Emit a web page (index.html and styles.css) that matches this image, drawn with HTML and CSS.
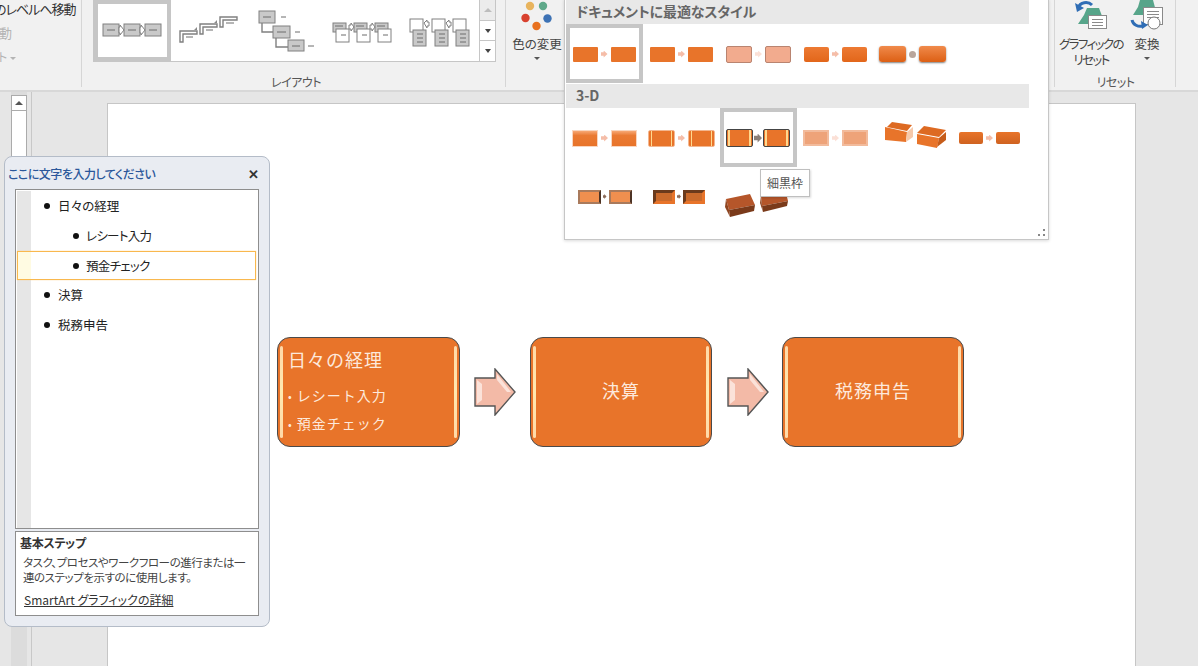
FILE: index.html
```html
<!DOCTYPE html>
<html lang="ja">
<head>
  <meta charset="UTF-8" />
  <title>SmartArt スタイル</title>
  <link rel="stylesheet" href="styles.css">
</head>
<body>
  <header class="ribbon">
    <section class="group group-outline">
      <div class="outline-row row-move">のレベルへ移動</div>
      <div class="outline-row row-off">移動</div>
      <div class="outline-row row-off row-last">ト<span class="caret caret-off"></span></div>
    </section>

    <section class="group group-layout">
      <div class="gallery">
        <div class="layout-cell is-selected">
          <svg width="69" height="53" viewBox="0 0 69 53">
            <g class="ic-fill"><rect x="5" y="20" width="16" height="12"/><rect x="26" y="20" width="16" height="12"/><rect x="47" y="20" width="16" height="12"/></g>
            <g class="ic-white"><path d="M21 23h1v-2l4 5-4 5v-2h-1z"/><path d="M42 23h1v-2l4 5-4 5v-2h-1z"/></g>
            <path class="ic-dash" d="M9 26h8M30 26h8M51 26h8"/>
          </svg>
        </div>
        <div class="layout-cell">
          <svg width="77" height="60" viewBox="0 0 77 60">
            <g class="ic-line"><path d="M9 41V30h17v3H12v8z"/><path d="M29 33V23h17v3H32v7z"/><path d="M49 26V16h17v3H52v7z"/></g>
            <path class="ic-dash" d="M15 36h7M35 29h7M55 22h8"/>
            <path class="ic-tri" d="M23 29l3-3v3zM43 22l3-3v3z"/>
          </svg>
        </div>
        <div class="layout-cell">
          <svg width="77" height="60" viewBox="0 0 77 60">
            <g class="ic-line"><path d="M14 22v9h11M28 37v9h12"/></g>
            <g class="ic-fill"><rect x="11" y="10" width="16" height="12"/><rect x="25" y="25" width="17" height="12"/><rect x="40" y="39" width="16" height="11"/></g>
            <path class="ic-dash" d="M15 16h8M29 31h9M44 45h8M33 16h5M47 31h5M60 45h6"/>
          </svg>
        </div>
        <div class="layout-cell">
          <svg width="77" height="60" viewBox="0 0 77 60">
            <g class="ic-fill"><rect x="8" y="22" width="13" height="9"/><rect x="29" y="22" width="13" height="9"/><rect x="50" y="22" width="13" height="9"/></g>
            <g class="ic-paper"><rect x="11" y="28" width="13" height="13"/><rect x="32" y="28" width="13" height="13"/><rect x="53" y="28" width="13" height="13"/></g>
            <g class="ic-white"><path d="M24 24h2v-2l3 4-3 4v-2h-2z"/><path d="M45 24h2v-2l3 4-3 4v-2h-2z"/></g>
            <path class="ic-dash" d="M10 25h8M31 25h8M52 25h8M16 34h5M37 34h5M58 34h5"/>
          </svg>
        </div>
        <div class="layout-cell">
          <svg width="77" height="60" viewBox="0 0 77 60">
            <g class="ic-paper"><rect x="8" y="18" width="13" height="13"/><rect x="30" y="18" width="13" height="13"/><rect x="51" y="18" width="13" height="13"/></g>
            <g class="ic-fill"><rect x="11" y="29" width="13" height="16"/><rect x="33" y="29" width="13" height="16"/><rect x="54" y="29" width="13" height="16"/></g>
            <g class="ic-white"><path d="M22 22l3-3v2h2v4h-2v2z"/><path d="M44 22l3-3v2h2v4h-2v2z"/></g>
            <path class="ic-dash" d="M15 33h6M15 37h6M15 41h6M37 33h6M37 37h6M37 41h6M58 33h6M58 37h6M58 41h6"/>
          </svg>
        </div>
        <div class="gallery-scroll">
          <span class="scroll-btn scroll-off"><i class="tri-up"></i></span>
          <span class="scroll-btn"><i class="tri-down"></i></span>
          <span class="scroll-btn"><i class="tri-more"></i></span>
        </div>
      </div>
      <div class="group-label label-layout">レイアウト</div>
    </section>

    <section class="group group-colors">
      <div class="big-btn colors-btn">
        <svg class="colors-icon" width="32" height="32" viewBox="0 0 32 32">
          <circle cx="9" cy="6" r="4.2" fill="#e8b45e"/>
          <circle cx="22" cy="6" r="4.2" fill="#5fa98a"/>
          <circle cx="4.5" cy="18" r="4.2" fill="#d8412f"/>
          <circle cx="26.5" cy="18.5" r="4.2" fill="#3d72b4"/>
          <circle cx="15.5" cy="26" r="4.2" fill="#e8711e"/>
        </svg>
        <span class="btn-text">色の変更</span>
        <span class="caret"></span>
      </div>
    </section>

    <section class="group group-reset">
      <div class="reset-row">
        <div class="big-btn">
          <svg class="reset-icon" width="36" height="30" viewBox="0 0 36 30">
            <path d="M5 24l6-9 3-7h12l3 8-2 8z" fill="#57a58a"/>
            <rect x="15.500" y="15.500" width="18" height="13" fill="#fff" stroke="#8a8a8a"/>
            <path d="M19 19.500h11M19 22.500h11M19 25.500h11" stroke="#8a8a8a"/>
            <path d="M5 8c2-6 10-7 14-3" fill="none" stroke="#2f6db5" stroke-width="3"/>
            <path d="M2 3l2 9 7-4z" fill="#2f6db5"/>
          </svg>
          <span class="btn-text btn-narrow">グラフィックの<br>リセット</span>
        </div>
        <div class="big-btn">
          <svg class="reset-icon" width="36" height="30" viewBox="0 0 36 30">
            <path d="M4 15l5-8 2-7h13l4 15z" fill="#57a58a"/>
            <rect x="14.500" y="7.500" width="19" height="17" fill="#fff" stroke="#8a8a8a"/>
            <path d="M18 11.500h12M18 14.500h12M18 17.500h12" stroke="#8a8a8a"/>
            <circle cx="25" cy="23" r="6" fill="#fff" stroke="#777"/>
            <path d="M3 20c1 5 6 7 11 6" fill="none" stroke="#2f6db5" stroke-width="3"/>
            <path d="M19 25l-7-4 1 8z" fill="#2f6db5"/>
          </svg>
          <span class="btn-text">変換</span>
          <span class="caret"></span>
        </div>
      </div>
      <div class="group-label">リセット</div>
    </section>
  </header>

  <main class="workspace">
    <div class="side-scroll">
      <span class="side-up"><i class="tri-up"></i></span>
      <span class="side-thumb"></span>
    </div>
    <div class="slide">
      <div class="diagram">
        <div class="step step-list">
          <div class="step-title">日々の経理</div>
          <ul>
            <li>レシート入力</li>
            <li>預金チェック</li>
          </ul>
        </div>
        <svg class="step-arrow" width="42" height="48" viewBox="0 0 42 48">
          <path d="M1 10h20V1l20 23-20 23V38H1z" fill="#f3baa7" stroke="#555" stroke-width="1.4"/>
          <path d="M3 12l5 4v16l-5 4zM23 6l14 18h-4L23 12z" fill="#fbe2d9"/>
        </svg>
        <div class="step step-mid">決算</div>
        <svg class="step-arrow" width="42" height="48" viewBox="0 0 42 48">
          <path d="M1 10h20V1l20 23-20 23V38H1z" fill="#f3baa7" stroke="#555" stroke-width="1.4"/>
          <path d="M3 12l5 4v16l-5 4zM23 6l14 18h-4L23 12z" fill="#fbe2d9"/>
        </svg>
        <div class="step step-mid">税務申告</div>
      </div>
    </div>
  </main>

  <aside class="text-pane">
    <div class="pane-head">
      <span class="pane-title">ここに文字を入力してください</span>
      <span class="pane-close">✕</span>
    </div>
    <ul class="pane-list">
      <li class="lvl-1">日々の経理</li>
      <li class="lvl-2">レシート入力</li>
      <li class="lvl-2 is-current">預金チェック</li>
      <li class="lvl-1">決算</li>
      <li class="lvl-1">税務申告</li>
    </ul>
    <div class="pane-info">
      <div class="info-title">基本ステップ</div>
      <p class="info-text">タスク、プロセスやワークフローの進行または一連のステップを示すのに使用します。</p>
      <span class="info-link">SmartArt グラフィックの詳細</span>
    </div>
  </aside>

  <div class="style-menu">
    <div class="menu-head">ドキュメントに最適なスタイル</div>
    <div class="menu-grid">
      <div class="style-cell is-selected"><span class="thumb"><i class="bx flat"></i><i class="ar"></i><i class="bx flat"></i></span></div>
      <div class="style-cell"><span class="thumb"><i class="bx flat"></i><i class="ar"></i><i class="bx flat"></i></span></div>
      <div class="style-cell"><span class="thumb"><i class="bx pale"></i><i class="ar ar-pale"></i><i class="bx pale"></i></span></div>
      <div class="style-cell"><span class="thumb"><i class="bx strong"></i><i class="ar"></i><i class="bx strong"></i></span></div>
      <div class="style-cell"><span class="thumb"><i class="bx shade"></i><i class="ar ar-grey"></i><i class="bx shade"></i></span></div>
    </div>
    <div class="menu-head">3-D</div>
    <div class="menu-grid">
      <div class="style-cell"><span class="thumb"><i class="bx bevel"></i><i class="ar"></i><i class="bx bevel"></i></span></div>
      <div class="style-cell"><span class="thumb"><i class="bx glow"></i><i class="ar"></i><i class="bx glow"></i></span></div>
      <div class="style-cell is-selected"><span class="thumb thumb-tight"><i class="bx dark"></i><i class="ar ar-dark"></i><i class="bx dark"></i></span></div>
      <div class="style-cell"><span class="thumb"><i class="bx soft"></i><i class="ar ar-pale"></i><i class="bx soft"></i></span></div>
      <div class="style-cell">
        <svg class="iso" width="62" height="30" viewBox="0 0 62 30">
          <path d="M2 7l5-5 20 3-5 6z" fill="#dd6a22"/>
          <path d="M0 7l22 5-1 10-21-2z" fill="#e8742a"/>
          <path d="M22 12l6-5v10l-7 5z" fill="#f6c9ab"/>
          <path d="M32 13l7-7 22 4-7 7z" fill="#dd6a22"/>
          <path d="M32 14l22 4-2 10-20-4z" fill="#e8742a"/>
          <path d="M54 18l7-6v8l-9 7z" fill="#c65c1a"/>
        </svg>
      </div>
      <div class="style-cell"><span class="thumb"><i class="bx slim"></i><i class="ar"></i><i class="bx slim"></i></span></div>
      <div class="style-cell"><span class="thumb thumb-small"><i class="bx frame"></i><i class="ar ar-tiny"></i><i class="bx frame"></i></span></div>
      <div class="style-cell"><span class="thumb thumb-small thumb-left"><i class="bx inset"></i><i class="ar ar-tiny"></i><i class="bx inset"></i></span></div>
      <div class="style-cell">
        <svg class="brick" width="66" height="30" viewBox="0 0 66 30">
          <path d="M2 6l24-5 5 11-26 5z" fill="#b5562a"/>
          <path d="M5 17l26-5-1 6-24 6z" fill="#7a3a1a"/>
          <path d="M2 6l3 11 1 7-5-10z" fill="#8f4520"/>
          <path d="M37 3l25-3 2 8-26 5z" fill="#b5562a"/>
          <path d="M38 13l26-5-1 5-24 6z" fill="#7a3a1a"/>
          <path d="M37 3l1 10 1 6-3-9z" fill="#8f4520"/>
        </svg>
      </div>
    </div>
    <span class="menu-grip"></span>
    <div class="tooltip">細黒枠</div>
  </div>
</body>
</html>
```

FILE: styles.css
```css
* {
  box-sizing: border-box;
}

html, body {
  height: 100%;
}

body {
  margin: 0;
  position: relative;
  display: flex;
  flex-direction: column;
  overflow: hidden;
  background: #e6e6e6;
  color: #333;
  font-family: "Noto Sans CJK JP", "Noto Sans", sans-serif;
  font-size: 12px;
  font-feature-settings: "palt";
}

/* ribbon */
.ribbon {
  flex: 0 0 92px;
  display: flex;
  background: #f1f1f1;
  border-bottom: 2px solid #d8d8d8;
}

.group {
  position: relative;
  display: flex;
  flex-direction: column;
  height: 87px;
  border-right: 1px solid #d6d6d6;
}

.group-label {
  margin-top: auto;
  margin-bottom: -5px;
  height: 20px;
  line-height: 20px;
  text-align: center;
  letter-spacing: -0.5px;
  color: #555;
}

.label-layout {
  padding-left: 3px;
}

.group-outline {
  flex: 0 0 82px;
  overflow: hidden;
  white-space: nowrap;
}

.outline-row {
  height: 24px;
  line-height: 17px;
  font-size: 13px;
}

.row-move {
  margin-left: -6px;
  letter-spacing: -1px;
}

.row-off {
  color: #b4b4b4;
  margin-left: -14px;
}

.row-last {
  margin-left: -2px;
  font-size: 12px;
}

.group-layout {
  flex: 0 0 423px;
  padding: 0 9px 0 11px;
}

.gallery {
  display: flex;
  height: 62px;
  background: #fff;
  border: 1px solid #c6c6c6;
  border-top: 0;
  overflow: hidden;
}

.layout-cell {
  flex: 0 0 77px;
  height: 61px;
  display: flex;
  align-items: center;
  justify-content: center;
}

.layout-cell.is-selected {
  border: 4px solid #c6c6c6;
}

.ic-fill rect {
  fill: #c9c9c9;
  stroke: #808080;
}

.ic-paper rect {
  fill: #fff;
  stroke: #808080;
}

.ic-white path {
  fill: #fff;
  stroke: #808080;
}

.ic-line path {
  fill: none;
  stroke: #808080;
  stroke-width: 1.4;
}

.ic-dash {
  fill: none;
  stroke: #6d6d6d;
}

.ic-tri {
  fill: #8a8a8a;
}

.gallery-scroll {
  margin-left: auto;
  flex: 0 0 16px;
  display: flex;
  flex-direction: column;
  border-left: 1px solid #c6c6c6;
}

.scroll-btn {
  flex: 1;
  display: flex;
  align-items: center;
  justify-content: center;
  border-bottom: 1px solid #c6c6c6;
}

.scroll-btn:last-child {
  border-bottom: 0;
}

.scroll-off {
  background: #ececec;
}

.scroll-off .tri-up {
  border-bottom-color: #bdbdbd;
}

.tri-up {
  width: 0;
  height: 0;
  border: 4px solid transparent;
  border-top: 0;
  border-bottom: 4px solid #555;
}

.tri-down,
.tri-more {
  width: 0;
  height: 0;
  border: 3px solid transparent;
  border-bottom: 0;
  border-top: 4px solid #444;
}

.tri-more {
  box-shadow: 0 -4px 0 -3px #444;
}

.group-colors {
  flex: 0 0 549px;
}

.big-btn {
  display: flex;
  flex-direction: column;
  align-items: center;
}

.btn-text {
  line-height: 16px;
  font-size: 12.5px;
  text-align: center;
  white-space: nowrap;
  color: #444;
}

.btn-narrow {
  letter-spacing: -1.6px;
}

.colors-btn {
  width: 62px;
  height: 64px;
}

.colors-icon {
  flex: 0 0 32px;
}

.colors-btn .btn-text {
  margin-top: 4px;
}

.caret {
  display: inline-block;
  width: 0;
  height: 0;
  margin-top: 5px;
  border: 3px solid transparent;
  border-bottom: 0;
  border-top: 3px solid #555;
}

.caret-off {
  margin: 0 0 2px 3px;
  border-top-color: #b4b4b4;
}

.group-reset {
  flex: 0 0 122px;
  padding-left: 1px;
  border-left: 1px solid #d6d6d6;
  margin-left: -1px;
}

.reset-row {
  display: flex;
}

.reset-row .big-btn:first-child {
  width: 70px;
}

.reset-row .big-btn:last-child {
  width: 42px;
}

.reset-icon {
  flex: 0 0 30px;
  margin-bottom: 6px;
}

/* slide area */
.workspace {
  flex: 1;
  display: flex;
  min-height: 0;
  overflow: hidden;
}

.side-scroll {
  flex: 0 0 21px;
  margin: 0 75px 0 11px;
  background: linear-gradient(90deg, #dcdcdc 16px, #e6e6e6 16px);
  border-right: 1px solid #c8c8c8;
}

.side-up,
.side-thumb {
  display: flex;
  align-items: center;
  justify-content: center;
  width: 16px;
  background: #fff;
  border: 1px solid #ababab;
}

.side-up {
  height: 16px;
  margin-top: 3px;
}

.side-thumb {
  height: 120px;
  margin-top: -1px;
}

.slide {
  flex: 0 0 1029px;
  height: 640px;
  margin-top: 11px;
  background: #fff;
  border: 1px solid #c6c6c6;
  padding: 233px 0 0 169px;
}

.diagram {
  display: flex;
  align-items: center;
}

.step {
  position: relative;
  flex: 0 0 183px;
  height: 110px;
  display: flex;
  align-items: center;
  justify-content: center;
  background: #e8742a;
  border: 1.5px solid #4a4a4a;
  border-radius: 13px;
  color: #fde9dc;
  font-size: 18px;
  letter-spacing: 1px;
  font-feature-settings: normal;
}

.step-mid {
  flex-basis: 182px;
  padding-bottom: 4px;
}

.step::before,
.step::after {
  content: "";
  position: absolute;
  top: 8px;
  bottom: 8px;
  width: 3px;
  border-radius: 2px;
  background: linear-gradient(#ffd9a8, #ffe9b0 50%, #ffd9a8);
}

.step::before {
  left: 2px;
}

.step::after {
  right: 2px;
}

.step-list {
  flex-direction: column;
  align-items: flex-start;
  justify-content: flex-start;
  padding: 8px 0 0 10px;
}

.step-title {
  line-height: 26px;
}

.step-list ul {
  margin: 10px 0 0;
  padding: 0;
  list-style: none;
  font-size: 14px;
}

.step-list li {
  line-height: 26.5px;
  letter-spacing: 1px;
}

.step-list li::before {
  content: "•";
  margin-right: 4px;
  font-size: 11px;
}

.step-arrow {
  flex: 0 0 42px;
  margin: 0 14px;
}

.step-mid + .step-arrow {
  margin: 0 13px 0 15px;
}

/* text pane */
.text-pane {
  position: absolute;
  left: 4px;
  top: 156px;
  width: 266px;
  height: 471px;
  padding: 0 10px;
  display: flex;
  flex-direction: column;
  background: #e9ecf2;
  border: 1px solid #b4bcc8;
  border-radius: 8px;
}

.pane-head {
  flex: 0 0 32px;
  display: flex;
  align-items: center;
  justify-content: space-between;
  margin-left: -7px;
  margin-right: 0;
}

.pane-title {
  color: #2b579a;
  font-size: 12px;
  font-weight: 500;
  letter-spacing: -0.5px;
}

.pane-close {
  color: #333;
  font-size: 13px;
  font-weight: 700;
}

.pane-list {
  flex: 0 0 340px;
  margin: 0;
  padding: 1px 1px 0;
  list-style: none;
  background: linear-gradient(90deg, #e6e6e6 14px, #fff 14px);
  background-origin: content-box;
  background-repeat: no-repeat;
  background-color: #fff;
  border: 1px solid #8e8e8e;
  color: #222;
  font-size: 12.5px;
}

.pane-list li {
  position: relative;
  height: 29.75px;
  line-height: 28px;
  border: 1px solid transparent;
}

.pane-list li::before {
  content: "";
  position: absolute;
  top: 11px;
  width: 6px;
  height: 6px;
  border-radius: 50%;
  background: #111;
}

.lvl-1 {
  padding-left: 40px;
}

.lvl-1::before {
  left: 26px;
}

.lvl-2 {
  padding-left: 68px;
  letter-spacing: -0.7px;
}

.lvl-2::before {
  left: 55px;
}

.pane-list li.is-current {
  margin: 0 1px 0 0;
  background: linear-gradient(90deg, #fffbe2 13px, #fff 13px);
  border-color: #f9b84e;
  box-shadow: 0 0 1px #fdc97a;
}

.pane-info {
  flex: 0 0 85px;
  margin-top: 2px;
  padding: 2px 4px;
  background: #fff;
  border: 1px solid #8e8e8e;
}

.info-title {
  font-weight: 700;
  line-height: 18px;
  letter-spacing: -0.3px;
  color: #333;
}

.info-text {
  margin: 3px 0 6px 3px;
  line-height: 15px;
  color: #444;
  font-size: 11.5px;
  letter-spacing: -0.45px;
}

.info-link {
  margin-left: 4px;
  line-height: 16px;
  color: #333;
  text-decoration: underline;
}

/* style dropdown */
.style-menu {
  position: absolute;
  left: 564px;
  top: -1px;
  width: 485px;
  height: 241px;
  padding: 0 19px 0 1px;
  background: #fff;
  border: 1px solid #c6c6c6;
  box-shadow: 0 1px 3px rgba(0, 0, 0, 0.15);
}

.menu-head {
  height: 24px;
  padding-left: 10px;
  line-height: 23px;
  background: #e8e8e8;
  color: #666;
  font-weight: 700;
  font-size: 14px;
  letter-spacing: -0.1px;
}

.menu-grid {
  display: grid;
  grid-template-columns: repeat(6, 77px);
  grid-auto-rows: 59px;
}

.menu-grid + .menu-head {
  margin-top: 1px;
}

.style-cell {
  display: flex;
  align-items: center;
  justify-content: center;
}

.style-cell.is-selected {
  border: 4px solid #c6c6c6;
}

.thumb {
  display: flex;
  align-items: center;
  gap: 3px;
  margin-top: 1px;
}

.thumb-tight {
  gap: 1px;
}

.thumb-small {
  gap: 2px;
  margin-top: 0;
}

.thumb-left {
  margin-right: 5px;
}

.style-cell.is-selected .thumb {
  margin-left: -1px;
}

.bx {
  display: block;
  width: 25px;
  height: 15px;
  background: #e8742a;
}

.ar {
  display: block;
  width: 7px;
  height: 7px;
  background: #f5bda8;
  clip-path: polygon(0 25%, 45% 25%, 45% 0, 100% 50%, 45% 100%, 45% 75%, 0 75%);
}

.ar-pale {
  background: #fbe0d6;
}

.ar-grey {
  background: #b9a69c;
  clip-path: none;
  border-radius: 50%;
}

.ar-dark {
  width: 8px;
  height: 9px;
  background: #8a7f78;
}

.ar-tiny {
  width: 4px;
  height: 5px;
  background: #8a6a58;
}

.flat {
  border-radius: 1px;
}

.pale {
  width: 26px;
  height: 17px;
  background: #f2ab8e;
  border: 1px solid #b98470;
  border-radius: 2px;
}

.strong {
  border-radius: 2px;
  background: linear-gradient(#ed7a33, #e2661a);
}

.shade {
  width: 27px;
  height: 16px;
  border-radius: 3px;
  background: linear-gradient(#f08a4b, #dc5f14);
  box-shadow: 0 1px 2px rgba(0, 0, 0, 0.5);
}

.bevel {
  width: 26px;
  height: 17px;
  background: linear-gradient(#f7a874 0, #ea7a33 30%, #e8742a);
  border: 1px solid #f9d6c0;
}

.glow {
  width: 27px;
  height: 17px;
  border: 1px solid #f3b68f;
  border-radius: 2px;
  background: linear-gradient(90deg, #e8742a 2px, #ffd98f 2px, #ffd98f 3px, #e8742a 3px, #e8742a 22px, #ffd98f 22px, #ffd98f 23px, #e8742a 23px);
}

.dark {
  width: 27px;
  height: 18px;
  border: 1px solid #444;
  border-radius: 2px;
  background: linear-gradient(90deg, #e8742a 1px, #ffd98f 1px, #ffd98f 3px, #e8742a 3px, #e8742a 22px, #ffd98f 22px, #ffd98f 24px, #e8742a 24px);
}

.soft {
  width: 26px;
  height: 16px;
  background: #eea379;
  border: 2px solid #f2bb9c;
}

.slim {
  width: 24px;
  height: 12px;
  border-radius: 2px;
  background: linear-gradient(#e8742a, #cf6220);
}

.frame {
  width: 23px;
  height: 14px;
  background: #f08f4f;
  border: 2px solid #a97a5c;
  border-right-color: #4d3325;
}

.inset {
  width: 22px;
  height: 14px;
  background: #c96a2c;
  border: 3px solid #e8742a;
  border-top-color: #6b3a1c;
  border-left-color: #6b3a1c;
}

.iso {
  margin: -5px 0 0 7px;
}

.brick {
  margin: 23px 3px 0 0;
}

.menu-grip {
  position: absolute;
  right: 3px;
  bottom: 3px;
  width: 7px;
  height: 7px;
  background:
    linear-gradient(#888, #888) 5px 0 / 2px 2px no-repeat,
    linear-gradient(#888, #888) 0 5px / 2px 2px no-repeat,
    linear-gradient(#888, #888) 5px 5px / 2px 2px no-repeat;
}

.tooltip {
  position: absolute;
  left: 195px;
  top: 169px;
  width: 50px;
  height: 28px;
  line-height: 26px;
  text-align: center;
  background: #fff;
  border: 1px solid #bfbfbf;
  box-shadow: 1px 1px 2px rgba(0, 0, 0, 0.15);
  color: #555;
  font-size: 12px;
}
```
